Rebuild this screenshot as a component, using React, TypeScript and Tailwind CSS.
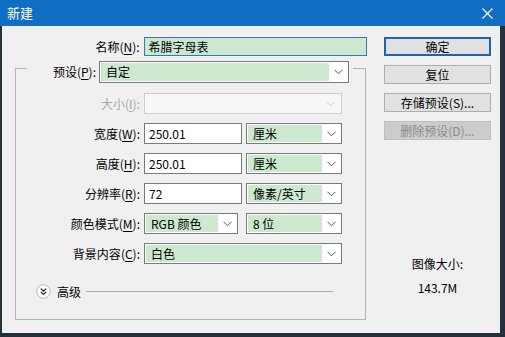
import React from "react";

const font = "font-['Noto_Sans_CJK_SC','Noto_Sans',sans-serif]";

function Chevron({ disabled }: { disabled?: boolean }) {
  return (
    <svg width="9" height="6" viewBox="0 0 9 6">
      <polyline
        points="0.5,0.8 4.5,4.8 8.5,0.8"
        fill="none"
        stroke={disabled ? "#c4c4c4" : "#555"}
        strokeWidth="1"
      />
    </svg>
  );
}

function Label({
  text,
  k,
  disabled,
  className,
}: {
  text: string;
  k: string;
  disabled?: boolean;
  className: string;
}) {
  return (
    <span
      className={`${className} text-right text-[12px] leading-none whitespace-nowrap ${
        disabled ? "text-[#a6a6a6]" : "text-black"
      }`}
    >
      {text}(<span className="underline underline-offset-2">{k}</span>):
    </span>
  );
}

function Combo({
  value,
  className,
  disabled,
}: {
  value?: string;
  className: string;
  disabled?: boolean;
}) {
  if (disabled) {
    return (
      <div
        className={`${className} flex h-full items-center justify-end border border-[#cccccc] bg-[#f7f7f7] pr-[6px]`}
      >
        <Chevron disabled />
      </div>
    );
  }
  return (
    <div
      className={`${className} flex h-full border border-[#7a7a7a] bg-white p-[1px]`}
    >
      <div className="flex flex-1 items-center bg-[#cce8cf] pl-[5px] text-[12px] text-black">
        {value}
      </div>
      <div className="flex w-[18px] items-center justify-center">
        <Chevron />
      </div>
    </div>
  );
}

function TextBox({ value, className }: { value: string; className: string }) {
  return (
    <div
      className={`${className} flex h-full items-center border border-[#7a7a7a] bg-white pl-[4px] text-[12px] text-black`}
    >
      {value}
    </div>
  );
}

function Row({ children }: { children: React.ReactNode }) {
  return <div className="flex h-[21px] items-center">{children}</div>;
}

function Btn({
  children,
  primary,
  disabled,
}: {
  children: React.ReactNode;
  primary?: boolean;
  disabled?: boolean;
}) {
  const look = primary
    ? "border-2 border-[#1e64b0] bg-[#e1e1e1] text-black"
    : disabled
      ? "border border-[#bfbfbf] bg-[#cccccc] text-[#8a8a8a]"
      : "border border-[#adadad] bg-[#e1e1e1] text-black";
  return (
    <div
      className={`flex h-[19px] w-[107px] items-center justify-center text-[12px] leading-none ${look}`}
    >
      {children}
    </div>
  );
}

function AdvancedIcon() {
  return (
    <svg width="15" height="15" viewBox="0 0 15 15">
      <circle cx="7.5" cy="7.5" r="6.8" fill="#fbfbfb" stroke="#b9b9b9" />
      <polyline points="4.8,4.6 7.5,7.1 10.2,4.6" fill="none" stroke="#222" strokeWidth="1.2" />
      <polyline points="4.8,7.9 7.5,10.4 10.2,7.9" fill="none" stroke="#222" strokeWidth="1.2" />
    </svg>
  );
}

export default function App() {
  return (
    <div className={`flex h-[337px] w-[505px] flex-col bg-[#24303c] ${font}`}>
      <div className="flex h-[26px] items-center justify-between bg-[#0f6dc2] pl-[7px] pr-[12px]">
        <span className="text-[13px] text-white">新建</span>
        <svg width="11" height="11" viewBox="0 0 11 11">
          <path d="M0.5 0.5 L10.5 10.5 M10.5 0.5 L0.5 10.5" stroke="#fff" strokeWidth="1.1" />
        </svg>
      </div>

      <div className="mb-[4px] ml-[2px] mr-[5px] flex flex-1 border-b-2 border-[#f6f1ee] bg-[#f0f0f0]">
        <div className="flex w-[365px] flex-col">
          <div className="mt-[11px] flex h-[19px] items-center">
            <Label text="名称" k="N" className="w-[138px]" />
            <div className="ml-[4px] flex h-full w-[224px] items-center border border-[#2f78c4] bg-[#cce8cf] pl-[4px] text-[12px] text-black">
              希腊字母表
            </div>
          </div>

          <div className="ml-[13px] mt-[12px] flex h-[252px] w-[351px] flex-col border border-[#b4b4b4]">
            <div className="ml-[11px] mr-[12px] mt-[-8px] flex h-[22px] items-center justify-end bg-[#f0f0f0] pr-[4px]">
              <Label text="预设" k="P" className="flex-1" />
              <Combo value="自定" className="ml-[3px] w-[250px]" />
            </div>

            <div className="mt-[10px] flex flex-col gap-[9px]">
              <Row>
                <Label text="大小" k="I" disabled className="w-[124px]" />
                <Combo disabled className="ml-[4px] w-[198px]" />
              </Row>
              <Row>
                <Label text="宽度" k="W" className="w-[124px]" />
                <TextBox value="250.01" className="ml-[4px] w-[98px]" />
                <Combo value="厘米" className="ml-[4px] w-[96px]" />
              </Row>
              <Row>
                <Label text="高度" k="H" className="w-[124px]" />
                <TextBox value="250.01" className="ml-[4px] w-[98px]" />
                <Combo value="厘米" className="ml-[4px] w-[96px]" />
              </Row>
              <Row>
                <Label text="分辨率" k="R" className="w-[124px]" />
                <TextBox value="72" className="ml-[4px] w-[98px]" />
                <Combo value="像素/英寸" className="ml-[4px] w-[96px]" />
              </Row>
              <Row>
                <Label text="颜色模式" k="M" className="w-[124px]" />
                <Combo value="RGB 颜色" className="ml-[4px] w-[94px]" />
                <Combo value="8 位" className="ml-[8px] w-[96px]" />
              </Row>
              <Row>
                <Label text="背景内容" k="C" className="w-[124px]" />
                <Combo value="白色" className="ml-[4px] w-[198px]" />
              </Row>
            </div>

            <div className="ml-[20px] mr-[32px] mt-[19px] flex h-[17px] items-center">
              <AdvancedIcon />
              <span className="ml-[6px] text-[12px] leading-none text-black">高级</span>
              <div className="ml-[5px] h-px flex-1 bg-[#a9a9a9]" />
            </div>
          </div>
        </div>

        <div className="ml-[17px] flex w-[107px] flex-col items-center">
          <div className="mt-[11px] flex flex-col gap-[9px]">
            <Btn primary>确定</Btn>
            <Btn>复位</Btn>
            <Btn>存储预设(S)...</Btn>
            <Btn disabled>删除预设(D)...</Btn>
          </div>
          <div className="mt-[116px] text-[12px] leading-[16px] text-black">图像大小:</div>
          <div className="mt-[8px] text-[12px] leading-[16px] text-black">143.7M</div>
        </div>
      </div>
    </div>
  );
}
